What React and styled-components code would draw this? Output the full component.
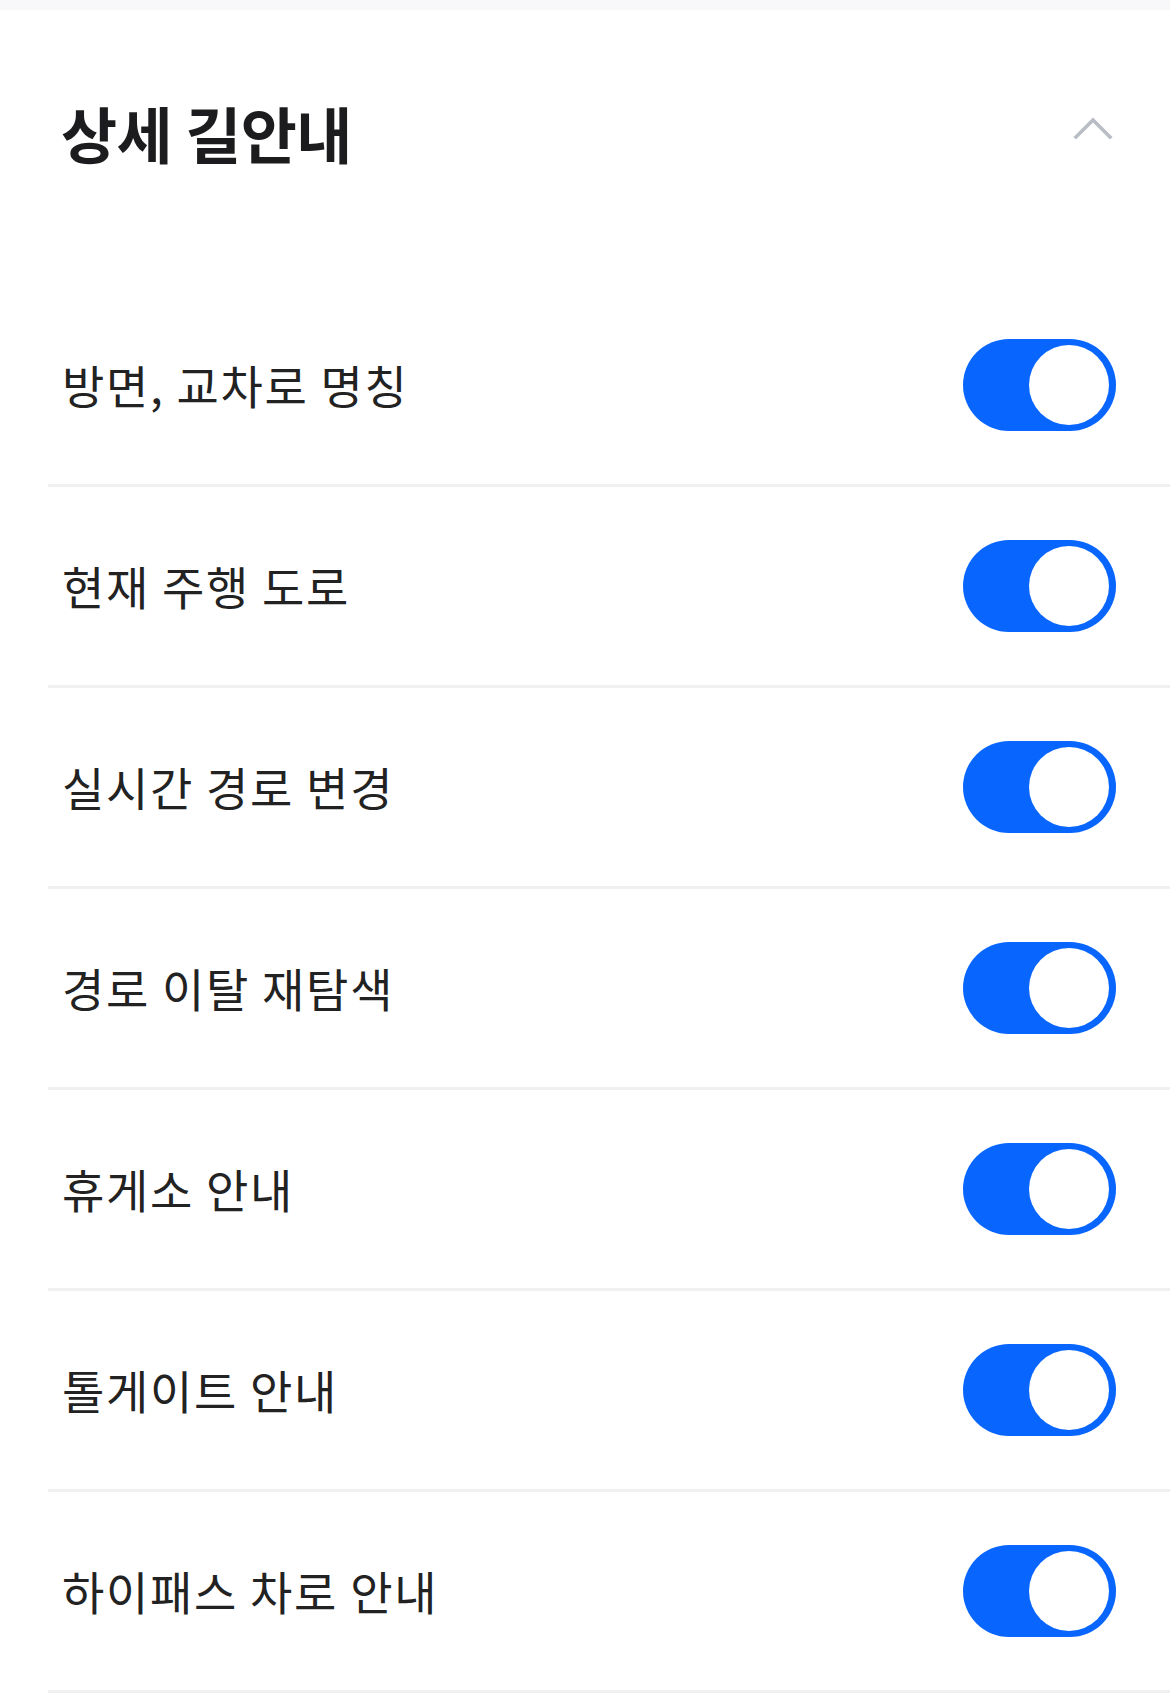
import React, { useState } from 'react';
import styled, { createGlobalStyle } from 'styled-components';

const GlobalStyle = createGlobalStyle`
  html, body {
    margin: 0;
    padding: 0;
    background: #ffffff;
  }

  body {
    font-family: 'Noto Sans CJK KR', 'Noto Sans', sans-serif;
    -webkit-font-smoothing: antialiased;
  }
`;

const Page = styled.div`
  width: 1170px;
  min-height: 1698px;
  background: #ffffff;
  border-top: 10px solid #f8f8fa;
  box-sizing: border-box;
`;

const Header = styled.div`
  display: flex;
  align-items: center;
  justify-content: space-between;
  height: 256px;
  padding: 0 55px 0 61px;
  box-sizing: border-box;
  margin-bottom: 20px;
`;

const HeaderInner = styled.div`
  display: flex;
  align-items: center;
  justify-content: space-between;
  width: 100%;
  margin-top: -12px;
`;

const Title = styled.h2`
  margin: 0;
  font-size: 61px;
  font-weight: 700;
  letter-spacing: -0.6px;
  color: #1c1c1e;
`;

const CollapseButton = styled.button`
  display: flex;
  align-items: center;
  justify-content: center;
  width: 44px;
  height: 44px;
  margin-top: -9px;
  padding: 0;
  border: none;
  background: none;
  cursor: pointer;
`;

const List = styled.ul`
  list-style: none;
  margin: 0 0 0 48px;
  padding: 0;
`;

const Row = styled.li`
  display: flex;
  align-items: center;
  justify-content: space-between;
  height: 201px;
  padding: 0 54px 0 14px;
  box-sizing: border-box;
  border-bottom: 3px solid #f0f0f2;
`;

const Label = styled.span`
  font-size: 46px;
  font-weight: 400;
  letter-spacing: 1.7px;
  color: #222222;
  margin-top: -2px;
`;

const Track = styled.button`
  position: relative;
  width: 153px;
  height: 92px;
  padding: 0;
  border: none;
  border-radius: 46px;
  background: ${({ $on }) => ($on ? '#0866ff' : '#d4d6da')};
  cursor: pointer;
  transition: background 0.2s;
`;

const Knob = styled.span`
  position: absolute;
  top: 6px;
  left: ${({ $on }) => ($on ? '66px' : '6px')};
  width: 80px;
  height: 80px;
  border-radius: 50%;
  background: #ffffff;
  transition: left 0.2s;
`;

const items = [
  '방면, 교차로 명칭',
  '현재 주행 도로',
  '실시간 경로 변경',
  '경로 이탈 재탐색',
  '휴게소 안내',
  '톨게이트 안내',
  '하이패스 차로 안내',
];

const Toggle = ({ on, onClick }) => (
  <Track $on={on} onClick={onClick} aria-pressed={on}>
    <Knob $on={on} />
  </Track>
);

const App = () => {
  const [states, setStates] = useState(items.map(() => true));

  const flip = (i) => setStates((s) => s.map((v, j) => (j === i ? !v : v)));

  return (
    <>
      <GlobalStyle />
      <Page>
        <Header>
          <HeaderInner>
            <Title>상세 길안내</Title>
            <CollapseButton aria-label="접기">
              <svg width="40" height="24" viewBox="0 0 40 24" fill="none">
                <path
                  d="M3 21 L20 4 L37 21"
                  stroke="#b9bdc5"
                  strokeWidth="3.6"
                  strokeLinecap="square"
                />
              </svg>
            </CollapseButton>
          </HeaderInner>
        </Header>
        <List>
          {items.map((label, i) => (
            <Row key={label}>
              <Label>{label}</Label>
              <Toggle on={states[i]} onClick={() => flip(i)} />
            </Row>
          ))}
        </List>
      </Page>
    </>
  );
};

export default App;
